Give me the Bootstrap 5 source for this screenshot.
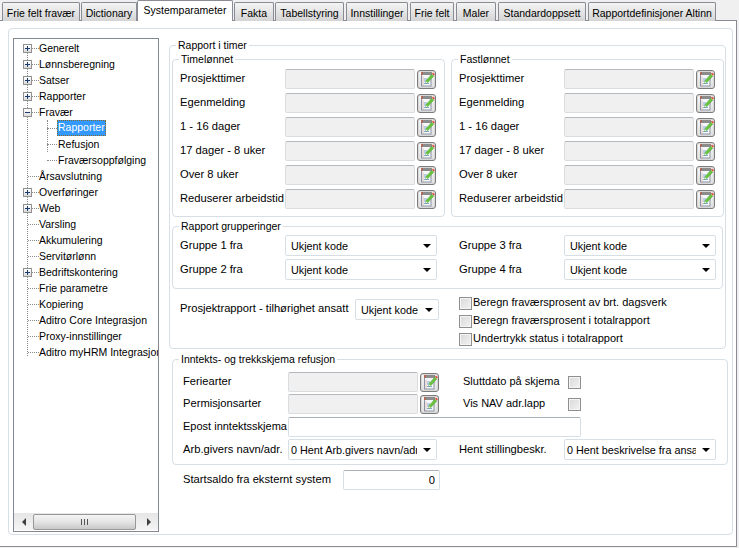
<!DOCTYPE html>
<html lang="no">
<head>
<meta charset="utf-8">
<title>Systemparameter</title>
<link href="https://cdn.jsdelivr.net/npm/bootstrap@5.3.0/dist/css/bootstrap.min.css" rel="stylesheet">
<style>
html,body{height:100%}
body{margin:0;background:#f0f0f0;font:11.2px/14px "Liberation Sans",Arial,sans-serif;color:#000;overflow:hidden}
.wintabs{height:21px;flex-wrap:nowrap;border:0;position:relative;z-index:2;align-items:flex-end}
.wintabs .nav-link{display:block;height:19px;margin:0 0 0 2px;padding:3px 0 0;text-align:center;font-size:10.5px;line-height:14px;color:#000;white-space:nowrap;border:1px solid #898c95;border-bottom:0;border-radius:2px 2px 0 0;background:linear-gradient(#f4f4f4,#e6e6e6 45%,#d4d4d4)}
.wintabs .nav-link.active{height:21px;margin-left:0;padding-top:2px;background:#fff;border-color:#898c95;color:#000}
.wintabs .nav-item:nth-child(1) .nav-link{width:78px}
.wintabs .nav-item:nth-child(2) .nav-link{width:56px;margin-left:1px}
.wintabs .nav-item:nth-child(3) .nav-link{width:96px}
.wintabs .nav-item:nth-child(4) .nav-link{width:40px;margin-left:1px}
.wintabs .nav-item:nth-child(5) .nav-link{width:69px;margin-left:1px}
.wintabs .nav-item:nth-child(6) .nav-link{width:62px}
.wintabs .nav-item:nth-child(7) .nav-link{width:44px}
.wintabs .nav-item:nth-child(8) .nav-link{width:40px}
.wintabs .nav-item:nth-child(9) .nav-link{width:88px}
.wintabs .nav-item:nth-child(10) .nav-link{width:128px}
.winpanel{width:737px;height:527px;margin-top:-1px;background:#fff;border:1px solid #898c95;border-left:0;padding:7px 3px 0 8px}
.outerbox{width:725px;height:507px;border:1px solid #d5dfe5;border-radius:4px;padding:9px 0 0 4px}
.treebox{width:146px;height:494px;border:1px solid #828790;background:#fff;flex:none;font-size:10.5px}
.treelist{position:relative;flex:1 1 auto;overflow:hidden;padding-top:1px}
.treelist::before{content:"";position:absolute;left:13px;top:12px;height:305px;border-left:1px dotted #8a8a8a}
.treerow{height:16px;white-space:nowrap}
.expander{width:9px;height:9px;margin-left:9px;border:1px solid #919191;background:linear-gradient(#fff,#dcdcdc);position:relative;flex:none;z-index:1}
.expander::before{content:"";position:absolute;left:1px;right:1px;top:3px;height:1px;background:#1d3a6e}
.expander.plus::after{content:"";position:absolute;top:1px;bottom:1px;left:3px;width:1px;background:#1d3a6e}
.dotsh{width:7px;border-top:1px dotted #8a8a8a;flex:none}
.dotsleaf{width:11px;margin-left:14px;border-top:1px dotted #8a8a8a;flex:none}
.subtree{position:relative}
.subtree::before{content:"";position:absolute;left:33px;top:0;height:32px;border-left:1px dotted #8a8a8a}
.dotssub{width:10px;margin-left:33px;border-top:1px dotted #8a8a8a;flex:none}
.treesel{margin-left:0;padding:0 1px;height:16px;line-height:15px;background:#3399ff;color:#fff;outline:1px dotted #8a6a20;outline-offset:-1px}
.subtxt{padding-left:1px}
.hscroll{height:17px;background:linear-gradient(#e6e6e6,#f4f4f4);flex:none;margin-bottom:1px}
.scarrow{width:19px;flex:none;font-size:0}
.scarrow::before{content:"";border:4px solid transparent}
.scarrow.lft::before{border-left:0;border-right-color:#3f3f3f}
.scarrow.rgt::before{border-right:0;border-left-color:#3f3f3f}
.scthumb{width:103px;height:16px;border:1px solid #979797;border-radius:2px;background:linear-gradient(#f4f4f4,#e4e4e4 50%,#c8c8c8);flex:none}
.scgrip{width:7px;height:6px;background:repeating-linear-gradient(90deg,#555 0 1px,transparent 1px 3px)}
.scwrap{flex:1 1 auto}
.rightcol{margin-left:10px;width:559px;flex:none}
fieldset.winfs{border:1px solid #d5dfe5;border-radius:4px;padding:0;margin:0;min-width:0}
fieldset.winfs>legend{float:none;width:auto;margin:0 0 0 6px;padding:0 2px;font-size:10.5px;line-height:14px}
fieldset.fs-main{width:557px;height:311px}
fieldset.fs-sub{width:273px;height:165px}
.fs-subrow{gap:6px;margin-left:2px}
fieldset.fs-grp{width:551px;height:70px;margin:2px 0 0 2px}
fieldset.fs-inn{width:556px;height:113px;margin:3px 0 0 3px}
.rowsblock{padding:3px 0 0 7px}
.frow{height:20px;margin-bottom:4px}
.lab105{width:105px;flex:none;white-space:nowrap;padding-bottom:2px}
.form-control.winin{height:20px;min-height:0;padding:0 4px;border:1px solid #d5dfe5;border-top-color:#abb0b6;border-radius:2px;font-size:11.2px;line-height:14px;color:#000;flex:none;background:#fff}
.form-control.winin.ro{width:130px;background:#f0f0f0;border-color:#d9dde0;border-top-color:#b5b8bc}
.form-select.winsel{height:21px;padding:0 16px 0 5px;border:1px solid #d5dfe5;border-radius:2px;font-size:10.8px;line-height:14px;color:#000;flex:none;width:152px;background-color:#fff;background-image:url("data:image/svg+xml,%3Csvg xmlns='http://www.w3.org/2000/svg' width='8' height='4'%3E%3Cpath d='M0 0h8L4 4z' fill='%23000'/%3E%3C/svg%3E");background-position:right 5px center;background-size:8px 4px;box-shadow:none}
.form-select.winsel.sel84{width:84px}
.form-select.winsel.w149{width:149px}
.form-select.winsel.selnarrow{padding:0 19px 0 2px}
.winbtn{width:19px;height:19px;padding:0;margin:1px 0 0 2px;border:1px solid #7c7c7c;border-radius:3px;background:linear-gradient(#f7f7f7,#dfdfdf);box-shadow:inset 0 0 0 1px #d8d8d8;flex:none;line-height:0}
.winbtn:hover{background:#eee;border-color:#7c7c7c}
.winbtn svg{display:block;margin:0 0 0 1px}
.grprows{padding:2px 0 0 7px}
.grprow{height:21px;margin-bottom:3px}
.gapmid{margin-left:22px}
.projrow{padding:8px 0 0 10px}
.lab175{width:175px;flex:none;padding-top:4px;white-space:nowrap}
.sel84wrap{padding-top:2px}
.checks{margin-left:20px;font-size:11px}
.checkrow{height:13px;margin-bottom:5px;white-space:nowrap;line-height:11px}
.form-check-input.wincheck{width:13px;height:13px;margin:0 1px 0 0;border:1px solid #8e8f8f;border-radius:0;background:linear-gradient(135deg,#d9d9d9,#f2f2f2);box-shadow:inset 0 0 0 1px #f4f4f4;flex:none;float:none}
.innrows{padding:6px 0 0 10px}
.inrow{height:20px;margin-bottom:2px}
.lab105b{width:105px;flex:none;white-space:nowrap;padding-bottom:2px}
.tightlab{font-size:11px}
.sluttlab{width:105px;margin-left:24px;flex:none;white-space:nowrap;padding-bottom:2px;font-size:11px}
.form-control.winin.w293{width:293px}
.inrow3{margin-top:3px}
.inrow4{margin-top:1px;height:21px}
.startrow{margin:5px 0 0 14px;height:20px}
.lab160{width:160px;flex:none;padding-bottom:2px}
.form-control.winin.w97{width:97px}
</style>
</head>
<body>
<svg width="0" height="0" class="position-absolute">
<symbol id="noteicon" viewBox="0 0 16 17">
<rect x="2.5" y="2.5" width="9.5" height="12.5" fill="#f5f7fa" stroke="#8a93a3"/>
<rect x="2" y="1" width="11" height="3" fill="#8c8c8c"/>
<rect x="2" y="1" width="2" height="3" fill="#b06a5a"/>
<path d="M4 5.5v9" stroke="#d9a39a" stroke-width=".7" fill="none"/>
<path d="M5 8h3M5 10h3M5 12.5h5" stroke="#7fa6d6" fill="none"/>
<path d="M6.5 12.5l.6-3L12.8 3.2l2 1.8-5.6 6.3z" fill="#6cc440" stroke="#3d8f24" stroke-width=".4"/>
<path d="M13 2.6l1-1 1.8 1.6-.9 1.2z" fill="#e2422b"/>
<path d="M6.5 12.5l.5-2.2 1.6 1.2z" fill="#eef0d8"/>
</symbol>
</svg>

<ul class="nav nav-tabs wintabs">
<li class="nav-item"><a class="nav-link" href="#">Frie felt fravær</a></li>
<li class="nav-item"><a class="nav-link" href="#">Dictionary</a></li>
<li class="nav-item"><a class="nav-link active" href="#">Systemparameter</a></li>
<li class="nav-item"><a class="nav-link" href="#">Fakta</a></li>
<li class="nav-item"><a class="nav-link" href="#">Tabellstyring</a></li>
<li class="nav-item"><a class="nav-link" href="#">Innstillinger</a></li>
<li class="nav-item"><a class="nav-link" href="#">Frie felt</a></li>
<li class="nav-item"><a class="nav-link" href="#">Maler</a></li>
<li class="nav-item"><a class="nav-link" href="#">Standardoppsett</a></li>
<li class="nav-item"><a class="nav-link" href="#">Rapportdefinisjoner Altinn</a></li>
</ul>

<div class="winpanel">
<div class="outerbox d-flex">

<div class="treebox d-flex flex-column">
<div class="treelist">
<div class="treerow d-flex align-items-center"><span class="expander plus"></span><span class="dotsh"></span>Generelt</div>
<div class="treerow d-flex align-items-center"><span class="expander plus"></span><span class="dotsh"></span>Lønnsberegning</div>
<div class="treerow d-flex align-items-center"><span class="expander plus"></span><span class="dotsh"></span>Satser</div>
<div class="treerow d-flex align-items-center"><span class="expander plus"></span><span class="dotsh"></span>Rapporter</div>
<div class="treerow d-flex align-items-center"><span class="expander"></span><span class="dotsh"></span>Fravær</div>
<div class="subtree">
<div class="treerow d-flex align-items-center"><span class="dotssub"></span><span class="treesel">Rapporter</span></div>
<div class="treerow d-flex align-items-center"><span class="dotssub"></span><span class="subtxt">Refusjon</span></div>
<div class="treerow d-flex align-items-center"><span class="dotssub"></span><span class="subtxt">Fraværsoppfølging</span></div>
</div>
<div class="treerow d-flex align-items-center"><span class="dotsleaf"></span>Årsavslutning</div>
<div class="treerow d-flex align-items-center"><span class="expander plus"></span><span class="dotsh"></span>Overføringer</div>
<div class="treerow d-flex align-items-center"><span class="expander plus"></span><span class="dotsh"></span>Web</div>
<div class="treerow d-flex align-items-center"><span class="dotsleaf"></span>Varsling</div>
<div class="treerow d-flex align-items-center"><span class="dotsleaf"></span>Akkumulering</div>
<div class="treerow d-flex align-items-center"><span class="dotsleaf"></span>Servitørlønn</div>
<div class="treerow d-flex align-items-center"><span class="expander plus"></span><span class="dotsh"></span>Bedriftskontering</div>
<div class="treerow d-flex align-items-center"><span class="dotsleaf"></span>Frie parametre</div>
<div class="treerow d-flex align-items-center"><span class="dotsleaf"></span>Kopiering</div>
<div class="treerow d-flex align-items-center"><span class="dotsleaf"></span>Aditro Core Integrasjon</div>
<div class="treerow d-flex align-items-center"><span class="dotsleaf"></span>Proxy-innstillinger</div>
<div class="treerow d-flex align-items-center"><span class="dotsleaf"></span>Aditro myHRM Integrasjon</div>
</div>
<div class="hscroll d-flex align-items-center">
<span class="scarrow lft d-flex justify-content-center align-items-center"></span>
<div class="scwrap"><div class="scthumb d-flex justify-content-center align-items-center"><span class="scgrip"></span></div></div>
<span class="scarrow rgt d-flex justify-content-center align-items-center"></span>
</div>
</div>

<div class="rightcol">
<fieldset class="winfs fs-main">
<legend>Rapport i timer</legend>
<div class="d-flex fs-subrow">
<fieldset class="winfs fs-sub">
<legend>Timelønnet</legend>
<div class="rowsblock">
<div class="frow d-flex align-items-center"><span class="lab105">Prosjekttimer</span><input class="form-control winin ro" readonly aria-label="Prosjekttimer"><button class="btn winbtn" type="button" aria-label="Velg"><svg width="16" height="17"><use href="#noteicon"/></svg></button></div>
<div class="frow d-flex align-items-center"><span class="lab105">Egenmelding</span><input class="form-control winin ro" readonly aria-label="Egenmelding"><button class="btn winbtn" type="button" aria-label="Velg"><svg width="16" height="17"><use href="#noteicon"/></svg></button></div>
<div class="frow d-flex align-items-center"><span class="lab105">1 - 16 dager</span><input class="form-control winin ro" readonly aria-label="1 - 16 dager"><button class="btn winbtn" type="button" aria-label="Velg"><svg width="16" height="17"><use href="#noteicon"/></svg></button></div>
<div class="frow d-flex align-items-center"><span class="lab105">17 dager - 8 uker</span><input class="form-control winin ro" readonly aria-label="17 dager - 8 uker"><button class="btn winbtn" type="button" aria-label="Velg"><svg width="16" height="17"><use href="#noteicon"/></svg></button></div>
<div class="frow d-flex align-items-center"><span class="lab105">Over 8 uker</span><input class="form-control winin ro" readonly aria-label="Over 8 uker"><button class="btn winbtn" type="button" aria-label="Velg"><svg width="16" height="17"><use href="#noteicon"/></svg></button></div>
<div class="frow d-flex align-items-center"><span class="lab105">Reduserer arbeidstid</span><input class="form-control winin ro" readonly aria-label="Reduserer arbeidstid"><button class="btn winbtn" type="button" aria-label="Velg"><svg width="16" height="17"><use href="#noteicon"/></svg></button></div>
</div>
</fieldset>
<fieldset class="winfs fs-sub">
<legend>Fastlønnet</legend>
<div class="rowsblock">
<div class="frow d-flex align-items-center"><span class="lab105">Prosjekttimer</span><input class="form-control winin ro" readonly aria-label="Prosjekttimer"><button class="btn winbtn" type="button" aria-label="Velg"><svg width="16" height="17"><use href="#noteicon"/></svg></button></div>
<div class="frow d-flex align-items-center"><span class="lab105">Egenmelding</span><input class="form-control winin ro" readonly aria-label="Egenmelding"><button class="btn winbtn" type="button" aria-label="Velg"><svg width="16" height="17"><use href="#noteicon"/></svg></button></div>
<div class="frow d-flex align-items-center"><span class="lab105">1 - 16 dager</span><input class="form-control winin ro" readonly aria-label="1 - 16 dager"><button class="btn winbtn" type="button" aria-label="Velg"><svg width="16" height="17"><use href="#noteicon"/></svg></button></div>
<div class="frow d-flex align-items-center"><span class="lab105">17 dager - 8 uker</span><input class="form-control winin ro" readonly aria-label="17 dager - 8 uker"><button class="btn winbtn" type="button" aria-label="Velg"><svg width="16" height="17"><use href="#noteicon"/></svg></button></div>
<div class="frow d-flex align-items-center"><span class="lab105">Over 8 uker</span><input class="form-control winin ro" readonly aria-label="Over 8 uker"><button class="btn winbtn" type="button" aria-label="Velg"><svg width="16" height="17"><use href="#noteicon"/></svg></button></div>
<div class="frow d-flex align-items-center"><span class="lab105">Reduserer arbeidstid</span><input class="form-control winin ro" readonly aria-label="Reduserer arbeidstid"><button class="btn winbtn" type="button" aria-label="Velg"><svg width="16" height="17"><use href="#noteicon"/></svg></button></div>
</div>
</fieldset>
</div>
<fieldset class="winfs fs-grp">
<legend>Rapport grupperinger</legend>
<div class="grprows">
<div class="grprow d-flex align-items-center"><span class="lab105">Gruppe 1 fra</span><select class="form-select winsel" aria-label="Gruppe 1 fra"><option>Ukjent kode</option></select><span class="lab105 gapmid">Gruppe 3 fra</span><select class="form-select winsel" aria-label="Gruppe 3 fra"><option>Ukjent kode</option></select></div>
<div class="grprow d-flex align-items-center"><span class="lab105">Gruppe 2 fra</span><select class="form-select winsel" aria-label="Gruppe 2 fra"><option>Ukjent kode</option></select><span class="lab105 gapmid">Gruppe 4 fra</span><select class="form-select winsel" aria-label="Gruppe 4 fra"><option>Ukjent kode</option></select></div>
</div>
</fieldset>
<div class="projrow d-flex">
<span class="lab175">Prosjektrapport - tilhørighet ansatt</span>
<div class="sel84wrap"><select class="form-select winsel sel84" aria-label="Prosjektrapport"><option>Ukjent kode</option></select></div>
<div class="checks">
<label class="checkrow d-flex align-items-start"><input class="form-check-input wincheck" type="checkbox">Beregn fraværsprosent av brt. dagsverk</label>
<label class="checkrow d-flex align-items-start"><input class="form-check-input wincheck" type="checkbox">Beregn fraværsprosent i totalrapport</label>
<label class="checkrow d-flex align-items-start"><input class="form-check-input wincheck" type="checkbox">Undertrykk status i totalrapport</label>
</div>
</div>
</fieldset>

<fieldset class="winfs fs-inn">
<legend>Inntekts- og trekkskjema refusjon</legend>
<div class="innrows">
<div class="inrow d-flex align-items-center"><span class="lab105b">Feriearter</span><input class="form-control winin ro" readonly aria-label="Feriearter"><button class="btn winbtn" type="button" aria-label="Velg"><svg width="16" height="17"><use href="#noteicon"/></svg></button><span class="sluttlab">Sluttdato på skjema</span><input class="form-check-input wincheck" type="checkbox" aria-label="Sluttdato på skjema"></div>
<div class="inrow d-flex align-items-center"><span class="lab105b">Permisjonsarter</span><input class="form-control winin ro" readonly aria-label="Permisjonsarter"><button class="btn winbtn" type="button" aria-label="Velg"><svg width="16" height="17"><use href="#noteicon"/></svg></button><span class="sluttlab">Vis NAV adr.lapp</span><input class="form-check-input wincheck" type="checkbox" aria-label="Vis NAV adr.lapp"></div>
<div class="inrow inrow3 d-flex align-items-center"><span class="lab105b tightlab">Epost inntektsskjema</span><input class="form-control winin w293" aria-label="Epost inntektsskjema"></div>
<div class="inrow inrow4 d-flex align-items-center"><span class="lab105b">Arb.givers navn/adr.</span><select class="form-select winsel w149 selnarrow" aria-label="Arb.givers navn/adr."><option>0 Hent Arb.givers navn/adr.</option></select><span class="lab105 gapmid">Hent stillingbeskr.</span><select class="form-select winsel selnarrow" aria-label="Hent stillingbeskr."><option>0 Hent beskrivelse fra ansatt</option></select></div>
</div>
</fieldset>

<div class="startrow d-flex align-items-center"><span class="lab160">Startsaldo fra eksternt system</span><input class="form-control winin w97 text-end" value="0" aria-label="Startsaldo fra eksternt system"></div>
</div>

</div>
</div>
<script src="https://cdn.jsdelivr.net/npm/bootstrap@5.3.0/dist/js/bootstrap.bundle.min.js"></script>
</body>
</html>
